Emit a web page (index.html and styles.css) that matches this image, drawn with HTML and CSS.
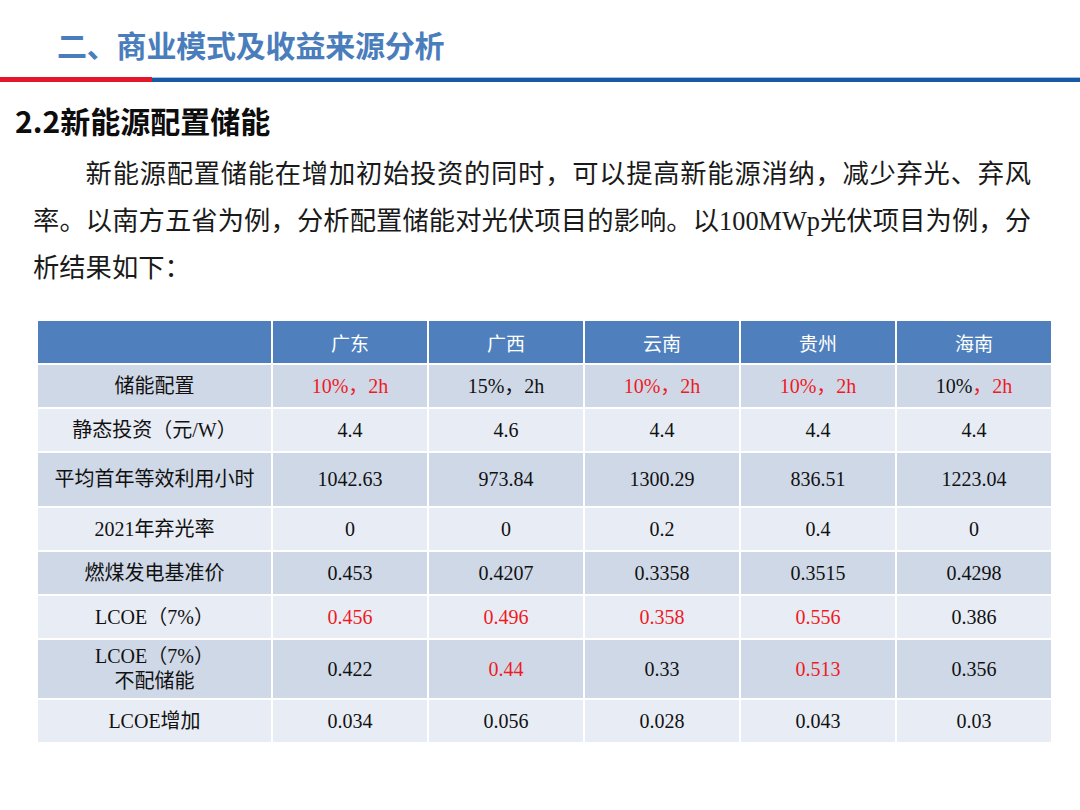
FILE: index.html
```html
<!DOCTYPE html>
<html lang="zh-CN">
<head>
<meta charset="utf-8">
<title>商业模式及收益来源分析</title>
<link rel="stylesheet" href="styles.css">
</head>
<body>
<header class="top">
  <h1 class="title">二、商业模式及收益来源分析</h1>
  <div class="rule"></div>
</header>
<main class="content">
  <h2 class="section">2.2新能源配置储能</h2>
  <p class="intro">新能源配置储能在增加初始投资的同时，可以提高新能源消纳，减少弃光、弃风率。以南方五省为例，分析配置储能对光伏项目的影响。以100MWp光伏项目为例，分析结果如下：</p>
  <table class="data">
    <colgroup>
      <col class="c-label">
      <col class="c-val"><col class="c-val"><col class="c-val"><col class="c-val"><col class="c-val">
    </colgroup>
    <thead>
      <tr class="r-head">
        <th></th><th>广东</th><th>广西</th><th>云南</th><th>贵州</th><th>海南</th>
      </tr>
    </thead>
    <tbody>
      <tr class="dark r-std">
        <td>储能配置</td>
        <td class="red">10%，2h</td>
        <td>15%，2h</td>
        <td class="red">10%，2h</td>
        <td class="red">10%，2h</td>
        <td>10%<span class="red">，2h</span></td>
      </tr>
      <tr class="light r-std">
        <td>静态投资（元/W）</td>
        <td>4.4</td><td>4.6</td><td>4.4</td><td>4.4</td><td>4.4</td>
      </tr>
      <tr class="dark r-mid">
        <td>平均首年等效利用小时</td>
        <td>1042.63</td><td>973.84</td><td>1300.29</td><td>836.51</td><td>1223.04</td>
      </tr>
      <tr class="light r-std">
        <td>2021年弃光率</td>
        <td>0</td><td>0</td><td>0.2</td><td>0.4</td><td>0</td>
      </tr>
      <tr class="dark r-std">
        <td>燃煤发电基准价</td>
        <td>0.453</td><td>0.4207</td><td>0.3358</td><td>0.3515</td><td>0.4298</td>
      </tr>
      <tr class="light r-std">
        <td>LCOE（7%）</td>
        <td class="red">0.456</td><td class="red">0.496</td><td class="red">0.358</td><td class="red">0.556</td><td>0.386</td>
      </tr>
      <tr class="dark r-tall">
        <td>LCOE（7%）<br>不配储能</td>
        <td>0.422</td><td class="red">0.44</td><td>0.33</td><td class="red">0.513</td><td>0.356</td>
      </tr>
      <tr class="light r-std">
        <td>LCOE增加</td>
        <td>0.034</td><td>0.056</td><td>0.028</td><td>0.043</td><td>0.03</td>
      </tr>
    </tbody>
  </table>
</main>
</body>
</html>
```
FILE: styles.css
```css
html, body {
  margin: 0;
  padding: 0;
  background: #ffffff;
}

body {
  width: 1080px;
  height: 810px;
  overflow: hidden;
  font-family: "Liberation Serif", "Noto Sans CJK SC", serif;
  color: #111;
}

.top {
  padding-top: 26px;
}

.title {
  margin: 0 0 15px 57px;
  font-family: "Noto Sans CJK SC", sans-serif;
  font-size: 30px;
  line-height: 36px;
  font-weight: 700;
  color: #4a7dbb;
  letter-spacing: -0.2px;
}

.rule {
  height: 5px;
  background:
    linear-gradient(to right, #e3162b 0, #e3162b 152px, transparent 152px),
    linear-gradient(to bottom, #a6c2e6 0, #a6c2e6 1px, #1659a7 1px);
}

.content {
  padding-top: 20px;
}

.section {
  margin: 0 0 13px 15px;
  font-family: "Noto Sans CJK SC", sans-serif;
  font-size: 30px;
  line-height: 36px;
  font-weight: 700;
  color: #0d0d0d;
}

.intro {
  margin: 0 0 27px 33px;
  width: 998px;
  font-size: 26.3px;
  line-height: 47px;
  text-indent: 2em;
  text-align: justify;
  color: #1a1a1a;
}

.data {
  margin-left: 36px;
  width: 1017px;
  table-layout: fixed;
  border-collapse: separate;
  border-spacing: 2px;
  font-size: 20px;
  line-height: 25px;
  text-align: center;
}

.c-label { width: 233px; }
.c-val { width: 154px; }

.data th,
.data td {
  padding: 0;
  vertical-align: middle;
  text-align: center;
}

.data th {
  background: #4f80bd;
  color: #ffffff;
  font-weight: 400;
  font-family: "Noto Sans CJK SC", sans-serif;
  font-size: 19px;
}

.r-head th { height: 42px; }
.r-std td { height: 42px; }
.r-mid td { height: 53px; }
.r-tall td { height: 58px; }

.dark td { background: #cfd8e7; }
.light td { background: #e8ecf4; }

.red { color: #ee1b24; }
```
